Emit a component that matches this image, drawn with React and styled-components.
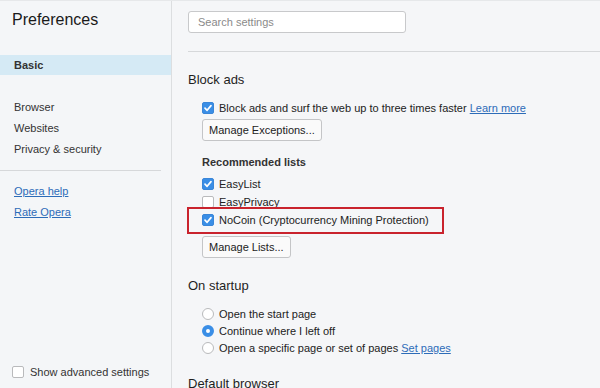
import React from "react";
import styled, { createGlobalStyle } from "styled-components";

const GlobalStyle = createGlobalStyle`
	html, body {
		margin: 0;
		padding: 0;
		background: #f5f6f8;
	}
	body {
		font-family: "Liberation Sans", Arial, sans-serif;
		color: #222;
	}
`;

const CheckIcon = () => (
	<svg width="10" height="10" viewBox="0 0 10 10">
		<path
			d="M2 5.2 L4.1 7.3 L8 2.6"
			fill="none"
			stroke="#fff"
			strokeWidth="1.7"
			strokeLinecap="round"
			strokeLinejoin="round"
		/>
	</svg>
);

const Checkbox = ({ checked }) => (
	<Box $checked={checked}>{checked && <CheckIcon />}</Box>
);

const App = () => {
	return (
		<>
			<GlobalStyle />
			<Page>
				<Sidebar>
					<Title>Preferences</Title>
					<NavItem $active>Basic</NavItem>
					<NavGroup $gap={22}>
						<NavItem>Browser</NavItem>
						<NavItem>Websites</NavItem>
						<NavItem>Privacy &amp; security</NavItem>
					</NavGroup>
					<SideDivider />
					<NavGroup $gap={10}>
						<NavItem $link>Opera help</NavItem>
						<NavItem $link>Rate Opera</NavItem>
					</NavGroup>
					<Advanced>
						<Checkbox />
						<span>Show advanced settings</span>
					</Advanced>
				</Sidebar>

				<Main>
					<Search placeholder="Search settings" />
					<MainDivider />

					<Heading $gap={20}>Block ads</Heading>
					<Section>
						<Row $first>
							<Checkbox checked />
							<span>
								Block ads and surf the web up to three times faster{" "}
								<Link>Learn more</Link>
							</span>
						</Row>
						<Button $gap={2}>Manage Exceptions...</Button>
						<SubHeading>Recommended lists</SubHeading>
						<List>
							<Row>
								<Checkbox checked />
								<span>EasyList</span>
							</Row>
							<Row>
								<Checkbox />
								<span>EasyPrivacy</span>
							</Row>
							<Row>
								<Checkbox checked />
								<span>NoCoin (Cryptocurrency Mining Protection)</span>
								<Highlight />
							</Row>
						</List>
						<Button $gap={7}>Manage Lists...</Button>
					</Section>

					<Heading $gap={20}>On startup</Heading>
					<Section>
						<Radios>
							<RadioRow>
								<Radio />
								<span>Open the start page</span>
							</RadioRow>
							<RadioRow>
								<Radio $checked />
								<span>Continue where I left off</span>
							</RadioRow>
							<RadioRow>
								<Radio />
								<span>
									Open a specific page or set of pages{" "}
									<Link>Set pages</Link>
								</span>
							</RadioRow>
						</Radios>
					</Section>

					<Heading $gap={20}>Default browser</Heading>
				</Main>
			</Page>
		</>
	);
};

export default App;

const Page = styled.div`
	display: flex;
	height: 388px;
	overflow: hidden;
	border-top: 1px solid #e6e8ea;
	box-sizing: border-box;
	background: #f5f6f8;
`;

const Sidebar = styled.aside`
	width: 171px;
	flex-shrink: 0;
	border-right: 1px solid #dcdee0;
	display: flex;
	flex-direction: column;
	background: #f4f6f8;
`;

const Title = styled.h1`
	margin: 9px 0 0 12px;
	font-size: 16px;
	line-height: 20px;
	font-weight: 400;
	color: #1a1a1a;
`;

const NavGroup = styled.div`
	display: flex;
	flex-direction: column;
	margin-top: ${(p) => p.$gap}px;
`;

const NavItem = styled.div`
	height: ${(p) => (p.$active ? 20 : 21)}px;
	line-height: ${(p) => (p.$active ? 20 : 21)}px;
	padding-left: 14px;
	font-size: 11px;
	font-weight: ${(p) => (p.$active ? 700 : 400)};
	color: ${(p) => (p.$link ? "#2d6cb8" : "#333")};
	text-decoration: ${(p) => (p.$link ? "underline" : "none")};
	background: ${(p) => (p.$active ? "#d5eaf5" : "transparent")};
	margin-top: ${(p) => (p.$active ? 25 : 0)}px;
`;

const SideDivider = styled.div`
	margin-top: 10px;
	width: 161px;
	height: 1px;
	background: #d6d8da;
`;

const Advanced = styled.label`
	margin-top: auto;
	margin-bottom: 8px;
	padding-left: 12px;
	display: flex;
	align-items: center;
	gap: 6px;
	height: 16px;
	font-size: 11px;
	color: #333;
`;

const Main = styled.main`
	flex: 1;
	padding-left: 16px;
	display: flex;
	flex-direction: column;
`;

const Search = styled.input`
	margin-top: 10px;
	width: 218px;
	height: 22px;
	flex-shrink: 0;
	box-sizing: border-box;
	border: 1px solid #c8c9cb;
	border-radius: 3px;
	background: #fff;
	padding: 0 9px;
	font-family: inherit;
	font-size: 11px;
	outline: none;
	&::placeholder {
		color: #8a8a8a;
	}
`;

const MainDivider = styled.div`
	margin-top: 18px;
	height: 1px;
	flex-shrink: 0;
	background: #d6d8da;
`;

const Heading = styled.h2`
	margin: ${(p) => p.$gap}px 0 0;
	font-size: 13px;
	line-height: 16px;
	font-weight: 400;
	color: #1f1f1f;
	flex-shrink: 0;
`;

const Section = styled.div`
	padding-left: 14px;
	display: flex;
	flex-direction: column;
	align-items: flex-start;
	flex-shrink: 0;
`;

const Row = styled.div`
	position: relative;
	display: flex;
	align-items: center;
	gap: 5px;
	height: 18px;
	font-size: 11px;
	color: #222;
	margin-top: ${(p) => (p.$first ? 11 : 0)}px;
`;

const Box = styled.span`
	width: 12px;
	height: 12px;
	box-sizing: border-box;
	border-radius: 2px;
	flex-shrink: 0;
	display: grid;
	place-content: center;
	background: ${(p) => (p.$checked ? "#3a8ee6" : "#fff")};
	border: 1px solid ${(p) => (p.$checked ? "#3a86d8" : "#b9babc")};
`;

const Link = styled.a`
	color: #2d6cb8;
	text-decoration: underline;
`;

const Button = styled.button`
	margin-top: ${(p) => p.$gap}px;
	height: 22px;
	padding: 0 6px;
	border: 1px solid #c4c5c7;
	border-radius: 3px;
	background: #fafafa;
	font-family: inherit;
	font-size: 11px;
	color: #222;
`;

const SubHeading = styled.div`
	margin-top: 13px;
	font-size: 11px;
	line-height: 16px;
	font-weight: 700;
	color: #333;
`;

const List = styled.div`
	display: flex;
	flex-direction: column;
	margin-top: 5px;
`;

const Highlight = styled.span`
	position: absolute;
	left: -15px;
	top: -4px;
	width: 257px;
	height: 27px;
	box-sizing: border-box;
	border: 2px solid #c9232d;
	pointer-events: none;
`;

const Radios = styled.div`
	display: flex;
	flex-direction: column;
	margin-top: 11px;
`;

const RadioRow = styled.div`
	display: flex;
	align-items: center;
	gap: 5px;
	height: 17px;
	font-size: 11px;
	color: #222;
`;

const Radio = styled.span`
	width: 12px;
	height: 12px;
	box-sizing: border-box;
	border-radius: 50%;
	flex-shrink: 0;
	background: #fff;
	border: ${(p) => (p.$checked ? "4px solid #3a8ee6" : "1px solid #b9babc")};
`;
